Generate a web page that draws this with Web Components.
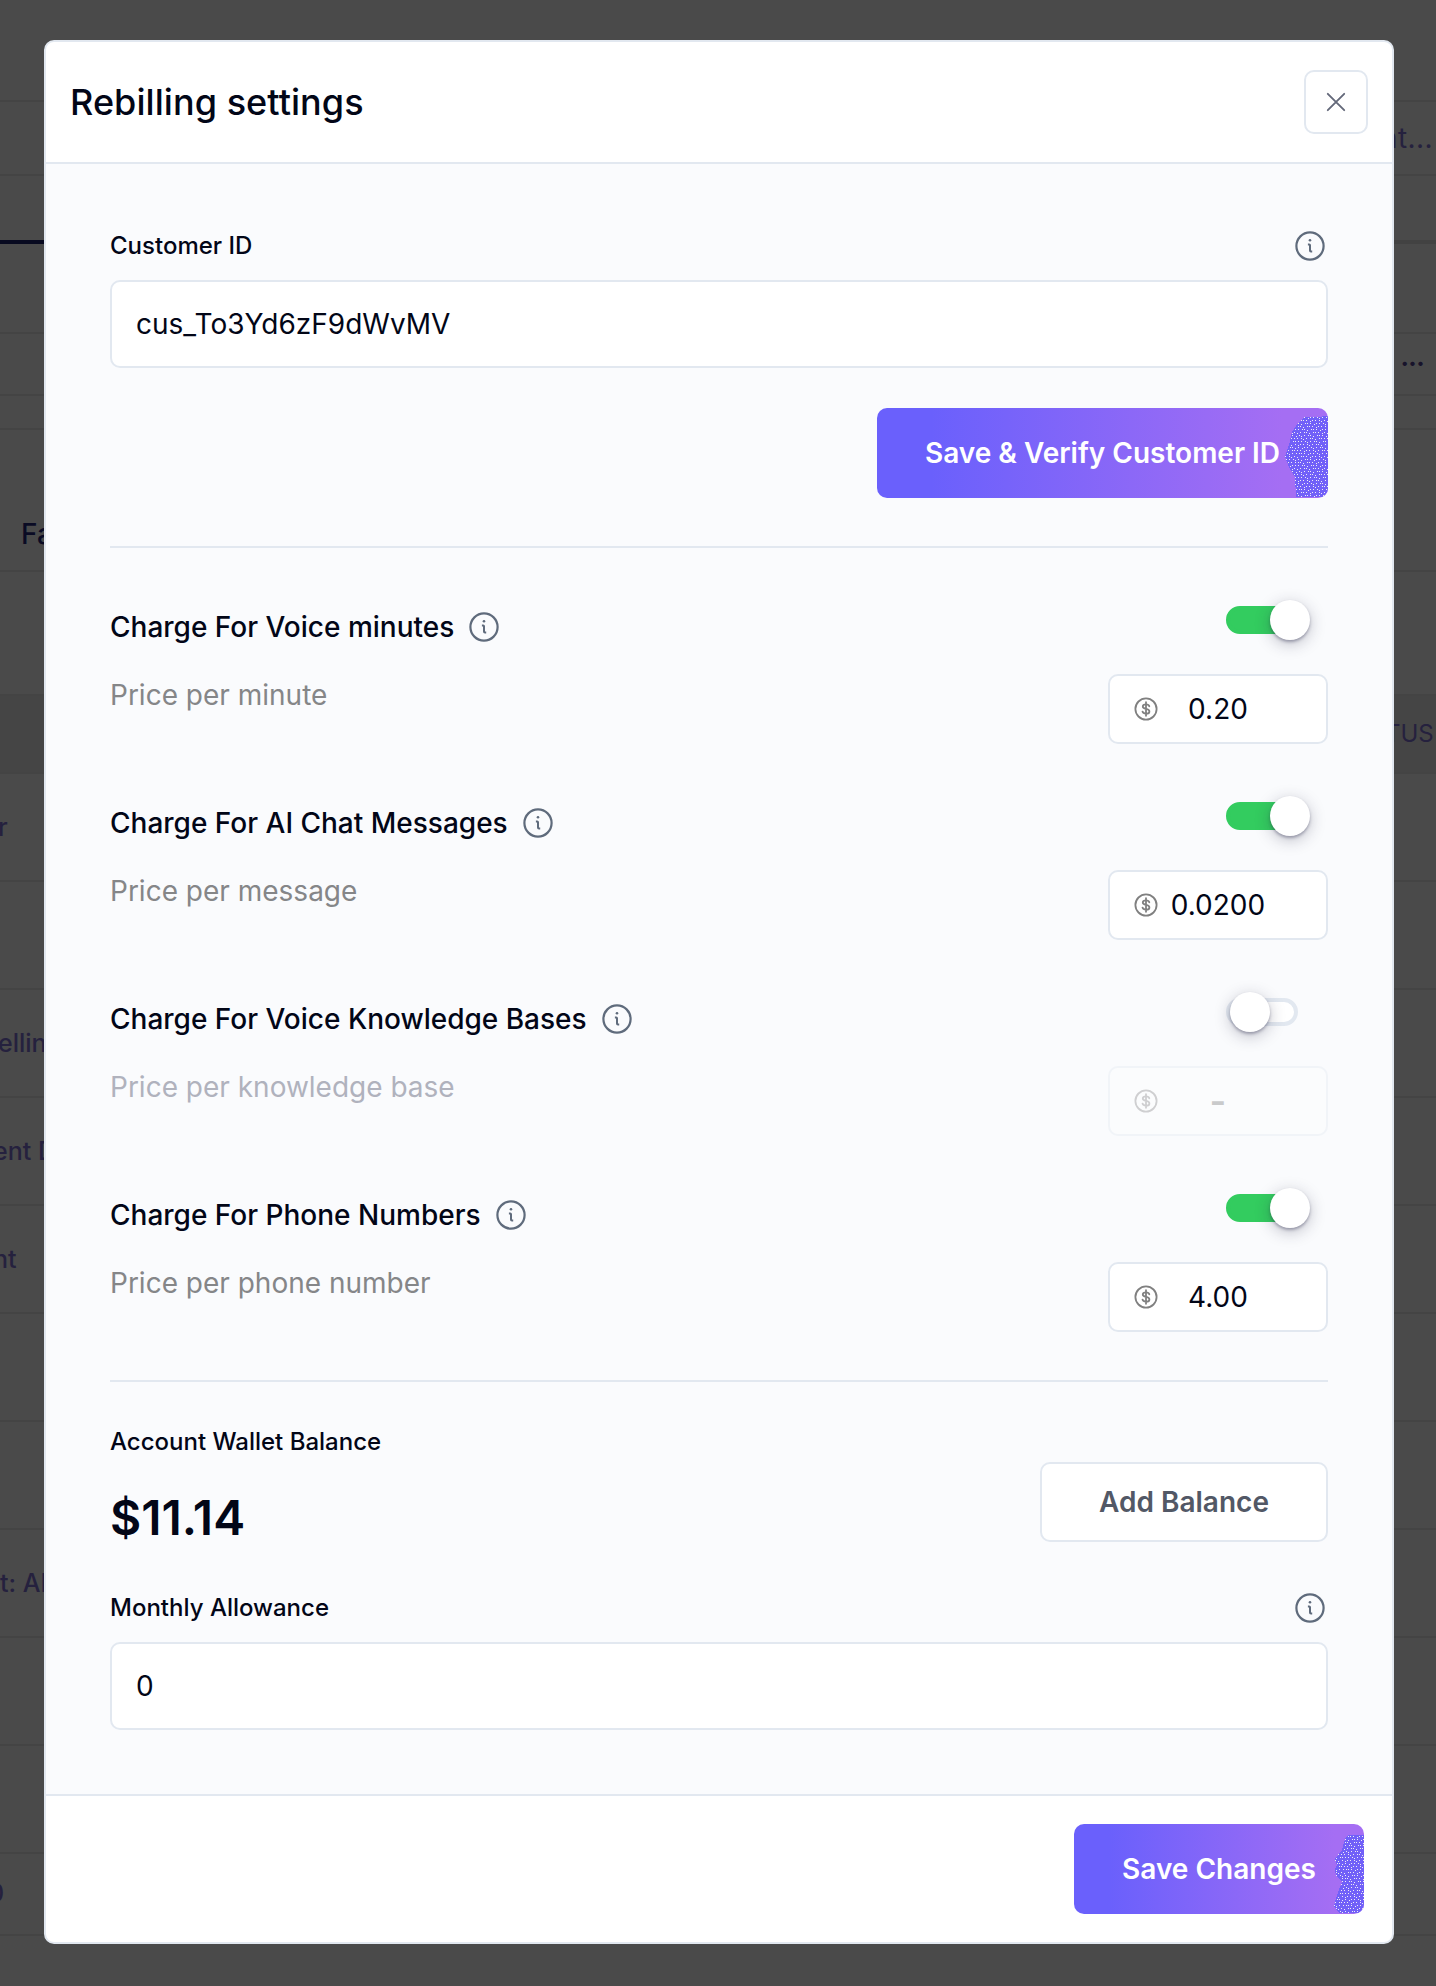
<!DOCTYPE html>
<html lang="en">
<head>
<meta charset="UTF-8">
<title>Rebilling settings</title>
<style>
    html, body {
        margin: 0;
        height: 1986px;
        overflow: hidden;
    }
    body {
        font-family: Inter, "Liberation Sans", sans-serif;
        color: #020617;
        background: #4a4a4a;
        --line: #e2e8f0;
        --muted: #858688;
    }
</style>
</head>
<body>
<rebilling-page></rebilling-page>

<script>
class InfoIcon extends HTMLElement {
    constructor() {
        super();
        this.attachShadow({mode: "open"}).innerHTML = `
            <style>
                :host { display: block; width: 32px; height: 32px; flex: none; }
                svg { display: block; }
            </style>
            <svg width="32" height="32" viewBox="0 0 32 32" fill="none" stroke="#5f6b7c" stroke-width="2.2">
                <circle cx="16" cy="16" r="13.6"/>
                <path d="M13.9 14.4h1.3q.8 0 .8.8v5.3q0 .9.9.9h1.3" stroke-width="2"/>
                <circle cx="16" cy="10.2" r="1.3" fill="#5f6b7c" stroke="none"/>
            </svg>`;
    }
}
customElements.define("info-icon", InfoIcon);

class TextField extends HTMLElement {
    connectedCallback() {
        this.attachShadow({mode: "open"}).innerHTML = `
            <style>
                :host { display: flex; flex-direction: column; gap: 18px; }
                .head { display: flex; align-items: center; justify-content: space-between; height: 32px; padding-right: 2px; }
                .label { padding-bottom: 2px; font-size: 24px; font-weight: 500; }
                .box {
                    box-sizing: border-box;
                    height: 88px;
                    display: flex;
                    align-items: center;
                    padding: 0 24px;
                    font-size: 28px;
                    background: #fff;
                    border: 2px solid var(--line);
                    border-radius: 10px;
                }
            </style>
            <div class="head"><span class="label">${this.getAttribute("label")}</span><info-icon></info-icon></div>
            <div class="box"><slot></slot></div>`;
    }
}
customElements.define("text-field", TextField);

class ToggleSwitch extends HTMLElement {
    constructor() {
        super();
        this.attachShadow({mode: "open"}).innerHTML = `
            <style>
                :host { display: flex; align-items: center; width: 72px; height: 40px; }
                .track {
                    box-sizing: border-box;
                    width: 72px;
                    height: 28px;
                    display: flex;
                    align-items: center;
                    border: 4px solid var(--line);
                    border-radius: 14px;
                    background: #fff;
                }
                .knob {
                    flex: none;
                    width: 40px;
                    height: 40px;
                    margin-left: -2px;
                    border-radius: 50%;
                    background: #fff;
                    box-shadow: 0 2px 3px rgba(39, 39, 70, .34), 0 4px 16px rgba(39, 39, 70, .28);
                }
                :host([on]) .track { background: #33cc5f; border-color: #33cc5f; }
                :host([on]) .knob { margin-left: 40px; }
                :host(:not([on])) .knob { margin-left: 0; }
            </style>
            <div class="track"><div class="knob"></div></div>`;
    }
}
customElements.define("toggle-switch", ToggleSwitch);

class PriceInput extends HTMLElement {
    constructor() {
        super();
        this.attachShadow({mode: "open"}).innerHTML = `
            <style>
                :host {
                    box-sizing: border-box;
                    display: flex;
                    align-items: center;
                    width: 220px;
                    height: 70px;
                    padding: 0 24px;
                    font-size: 28px;
                    background: #fff;
                    border: 2px solid var(--line);
                    border-radius: 10px;
                }
                svg { flex: none; }
                .value { width: 120px; text-align: center; }
                :host([off]) { opacity: .35; }
                :host([off]) .value { font-size: 36px; font-weight: 600; color: #707070; }
            </style>
            <svg width="24" height="24" viewBox="0 0 24 24" fill="none" stroke="#808080" stroke-width="1.8" stroke-linecap="round">
                <circle cx="12" cy="12" r="10.6"/>
                <path d="M15.3 9.3C15 8.1 13.7 7.4 12 7.4C10.1 7.4 8.8 8.2 8.8 9.6C8.8 11.1 10.1 11.6 12 11.9C13.9 12.2 15.4 12.8 15.4 14.4C15.4 15.8 13.9 16.7 12 16.7C10.2 16.7 8.9 15.9 8.5 14.6M12 5.2V18.8"/>
            </svg>
            <span class="value"><slot></slot></span>`;
    }
}
customElements.define("price-input", PriceInput);

class ChargeRow extends HTMLElement {
    connectedCallback() {
        const on = this.hasAttribute("on");
        this.attachShadow({mode: "open"}).innerHTML = `
            <style>
                :host { display: flex; justify-content: space-between; height: 144px; font-size: 28px; line-height: 34px; }
                .text { display: flex; flex-direction: column; gap: 34px; padding-top: 10px; }
                .title { display: flex; align-items: center; gap: 14px; height: 34px; font-weight: 500; }
                .sub { color: var(--muted); }
                .side { display: flex; flex-direction: column; align-items: flex-end; gap: 34px; }
                toggle-switch { margin-right: 30px; }
                :host(:not([on])) .sub { color: #b0b2bd; }
            </style>
            <div class="text">
                <div class="title"><span>${this.getAttribute("heading")}</span><info-icon></info-icon></div>
                <div class="sub">${this.getAttribute("sub")}</div>
            </div>
            <div class="side">
                <toggle-switch ${on ? "on" : ""}></toggle-switch>
                <price-input ${on ? "" : "off"}><slot></slot></price-input>
            </div>`;
    }
}
customElements.define("charge-row", ChargeRow);

// speckled shape peeking in at the right edge of the gradient buttons
const BLOBS = {
    verify: {width: 451, path: "M427 9H445V8H451V89H419L418 69L412 59L408 49L412 37L415 24L421 15Z"},
    save: {width: 290, path: "M274 11H290V89H265L260 82L263 71L268 58L262 52L261 45L263 41L261 35L268 26L271 15Z"}
};

class GradientButton extends HTMLElement {
    connectedCallback() {
        const blob = BLOBS[this.getAttribute("blob")];
        let dots = "";
        for (let y = 0; y < 12; y++) {
            for (let x = 0; x < 10; x++) {
                const px = x * 3 + (y % 2) + ((x * 7 + y * 5) % 3 === 0 ? 1 : 0);
                const py = y * 3 + ((x * 5 + y * 3) % 4 === 0 ? 1 : 0);
                dots += `<rect x="${px}" y="${py}" width="1" height="1"/>`;
            }
        }
        this.attachShadow({mode: "open"}).innerHTML = `
            <style>
                :host {
                    position: relative;
                    display: flex;
                    align-items: center;
                    justify-content: center;
                    width: ${blob.width}px;
                    height: 90px;
                    overflow: hidden;
                    border-radius: 10px;
                    color: #fff;
                    font-size: 28px;
                    font-weight: 600;
                    background: linear-gradient(90deg, #6a60fc 12%, #a56ef3 90%);
                }
                svg { position: absolute; inset: 0; }
                span { position: relative; }
            </style>
            <svg width="${blob.width}" height="90" shape-rendering="crispEdges">
                <defs><pattern id="dots" width="30" height="36" patternUnits="userSpaceOnUse" fill="#f1ecf4">${dots}</pattern></defs>
                <path d="${blob.path}" fill="#7160f8"/>
                <path d="${blob.path}" fill="url(#dots)"/>
            </svg>
            <span><slot></slot></span>`;
    }
}
customElements.define("gradient-button", GradientButton);

class WalletBalance extends HTMLElement {
    constructor() {
        super();
        this.attachShadow({mode: "open"}).innerHTML = `
            <style>
                :host { display: flex; justify-content: space-between; height: 122px; }
                .label { padding-top: 1px; font-size: 24px; line-height: 30px; font-weight: 500; }
                .amount { margin-top: 31px; font-size: 48px; line-height: 60px; font-weight: 600; }
                .add {
                    box-sizing: border-box;
                    width: 288px;
                    height: 80px;
                    margin-top: 36px;
                    display: flex;
                    align-items: center;
                    justify-content: center;
                    font-size: 28px;
                    font-weight: 600;
                    color: #525866;
                    background: #fff;
                    border: 2px solid var(--line);
                    border-radius: 10px;
                }
            </style>
            <div>
                <div class="label">Account Wallet Balance</div>
                <div class="amount"><slot></slot></div>
            </div>
            <div class="add">Add Balance</div>`;
    }
}
customElements.define("wallet-balance", WalletBalance);

class ModalDialog extends HTMLElement {
    constructor() {
        super();
        this.attachShadow({mode: "open"}).innerHTML = `
            <style>
                :host {
                    box-sizing: border-box;
                    display: flex;
                    flex-direction: column;
                    width: 1350px;
                    height: 1904px;
                    overflow: hidden;
                    background: #fff;
                    border: 2px solid var(--line);
                    border-radius: 10px;
                }
                header {
                    display: flex;
                    align-items: center;
                    justify-content: space-between;
                    height: 120px;
                    padding: 0 24px;
                    border-bottom: 2px solid var(--line);
                }
                .title { font-size: 36px; font-weight: 500; letter-spacing: .06px; }
                .close {
                    box-sizing: border-box;
                    width: 64px;
                    height: 64px;
                    display: grid;
                    place-items: center;
                    border: 2px solid var(--line);
                    border-radius: 10px;
                }
                main { flex: 1; padding: 66px 64px 0; background: #fafbfd; }
                footer {
                    display: flex;
                    justify-content: flex-end;
                    height: 90px;
                    padding: 28px;
                    border-top: 2px solid var(--line);
                }
            </style>
            <header>
                <span class="title"><slot name="title"></slot></span>
                <div class="close">
                    <svg width="20" height="20" viewBox="0 0 20 20" stroke="#64697a" stroke-width="1.9" stroke-linecap="round"><path d="M1.8 1.8l16.4 16.4M18.2 1.8L1.8 18.2"/></svg>
                </div>
            </header>
            <main><slot></slot></main>
            <footer><slot name="footer"></slot></footer>`;
    }
}
customElements.define("modal-dialog", ModalDialog);

// dimmed page behind the dialog: rows of [height, left text, left offset, right text, right offset, class]
const ROWS = [
    [102, "", 0, "", 0, ""],
    [74, "", 0, "nt...", 1381, "mid"],
    [64, "", 0, "", 0, "bare"],
    [4, "", 0, "", 0, "tabs"],
    [90, "", 0, "", 0, ""],
    [62, "", 0, "•••", 1401, "more"],
    [34, "", 0, "", 0, ""],
    [142, "Fa", 21, "", 0, "name"],
    [124, "", 0, "", 0, ""],
    [78, "", 0, "TUS", 1385, "head"],
    [108, "r", -2, "", 0, ""],
    [108, "", 0, "", 0, ""],
    [108, "ellin", -2, "", 0, ""],
    [108, "ent D", -7, "", 0, ""],
    [108, "nt", -7, "", 0, ""],
    [108, "", 0, "", 0, ""],
    [108, "", 0, "", 0, ""],
    [108, "ot: AI", -15, "", 0, ""],
    [108, "", 0, "", 0, ""],
    [108, "", 0, "", 0, ""],
    [82, "0", -12, "", 0, "last"]
];

class DimmedPage extends HTMLElement {
    constructor() {
        super();
        const rows = ROWS.map(([h, left, lx, right, rx, cls]) => `
            <div class="row ${cls}" style="height:${h}px">
                ${left ? `<span class="left" style="margin-left:${lx}px">${left}</span>` : ""}
                ${right ? `<span class="right" style="margin-left:${rx}px">${right}</span>` : ""}
            </div>`).join("");
        this.attachShadow({mode: "open"}).innerHTML = `
            <style>
                :host { display: block; height: 1986px; overflow: hidden; color: #25213e; font-size: 25px; font-weight: 500; }
                .row {
                    box-sizing: border-box;
                    display: flex;
                    align-items: center;
                    border-bottom: 2px solid #444;
                    white-space: nowrap;
                }
                .bare { border-bottom-color: transparent; }
                .tabs { border: 0; background: linear-gradient(90deg, #080a20 50%, #424242 50%); }
                .mid { font-size: 28px; font-weight: 400; }
                .mid .right { letter-spacing: .4px; }
                .more { color: #17132b; font-size: 14px; letter-spacing: .4px; }
                .more .right { padding-bottom: 4px; }
                .name { color: #0a0b24; font-size: 28px; }
                .name .left { padding-top: 68px; }
                .head { background: #454545; font-size: 24px; font-weight: 400; }
                .head .right { padding-bottom: 2px; }
                .last .left { padding-bottom: 2px; }
            </style>${rows}`;
    }
}
customElements.define("dimmed-page", DimmedPage);

class RebillingPage extends HTMLElement {
    constructor() {
        super();
        this.attachShadow({mode: "open"}).innerHTML = `
            <style>
                :host { display: grid; }
                dimmed-page, modal-dialog { grid-area: 1 / 1; }
                modal-dialog { position: relative; margin: 40px 0 0 44px; }
                .verify { display: flex; justify-content: flex-end; margin-top: 40px; }
                hr { height: 2px; margin: 48px 0 0; border: 0; background: var(--line); }
                .charges { display: flex; flex-direction: column; gap: 52px; margin-top: 52px; }
                wallet-balance { margin: 44px 0; }
            </style>
            <dimmed-page></dimmed-page>
            <modal-dialog>
                <span slot="title">Rebilling settings</span>
                <text-field label="Customer ID">cus_To3Yd6zF9dWvMV</text-field>
                <div class="verify"><gradient-button blob="verify">Save &amp; Verify Customer ID</gradient-button></div>
                <hr>
                <div class="charges">
                    <charge-row heading="Charge For Voice minutes" sub="Price per minute" on>0.20</charge-row>
                    <charge-row heading="Charge For AI Chat Messages" sub="Price per message" on>0.0200</charge-row>
                    <charge-row heading="Charge For Voice Knowledge Bases" sub="Price per knowledge base">-</charge-row>
                    <charge-row heading="Charge For Phone Numbers" sub="Price per phone number" on>4.00</charge-row>
                </div>
                <hr>
                <wallet-balance>$11.14</wallet-balance>
                <text-field label="Monthly Allowance">0</text-field>
                <gradient-button slot="footer" blob="save">Save Changes</gradient-button>
            </modal-dialog>`;
    }
}
customElements.define("rebilling-page", RebillingPage);
</script>
</body>
</html>
